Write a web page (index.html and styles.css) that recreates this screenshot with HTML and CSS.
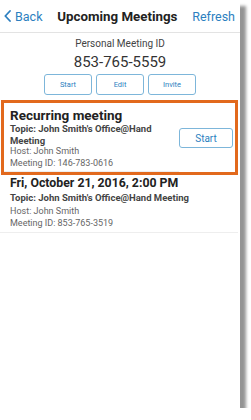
FILE: index.html
```html
<!DOCTYPE html>
<html>
<head>
<meta charset="utf-8">
<link rel="stylesheet" href="styles.css">
</head>
<body>
<div class="screen">
  <header class="topbar">
    <a class="back"><svg class="chev" width="7" height="12" viewBox="0 0 7 12"><path d="M6 1 L1.3 6 L6 11" fill="none" stroke="#2c7fc0" stroke-width="1.8" stroke-linecap="round" stroke-linejoin="round"/></svg>Back</a>
    <h1 class="title">Upcoming Meetings</h1>
    <a class="refresh">Refresh</a>
  </header>
  <section class="pmi">
    <div class="pmi-label">Personal Meeting ID</div>
    <div class="pmi-number">853-765-5559</div>
    <div class="pmi-actions">
      <button class="btn-sm">Start</button>
      <button class="btn-sm">Edit</button>
      <button class="btn-sm">Invite</button>
    </div>
  </section>
  <ul class="list">
    <li class="item item-hl">
      <div class="item-body">
        <div class="item-title">Recurring meeting</div>
        <div class="item-topic">Topic: John Smith's Office@Hand Meeting</div>
        <div class="item-meta">Host: John Smith</div>
        <div class="item-meta">Meeting ID: 146-783-0616</div>
      </div>
      <button class="btn-start">Start</button>
    </li>
    <li class="item item-plain">
      <div class="item-body">
        <div class="item-title big">Fri, October 21, 2016, 2:00 PM</div>
        <div class="item-topic">Topic: John Smith's Office@Hand Meeting</div>
        <div class="item-meta">Host: John Smith</div>
        <div class="item-meta">Meeting ID: 853-765-3519</div>
      </div>
    </li>
  </ul>
</div>
</body>
</html>
```

FILE: styles.css
```css
* { box-sizing: border-box; }
html, body { margin: 0; padding: 0; background: #fff; }
body { font-family: Roboto, "Noto Sans", Arial, sans-serif; }

.screen {
  width: 240px;
  height: 408px;
  background: #fff;
  box-shadow: 6px 6px 3px rgba(0,0,0,0.42);
  display: flex;
  flex-direction: column;
}

.topbar {
  height: 33px;
  border-bottom: 1px solid #e3e3e3;
  display: flex;
  align-items: center;
  justify-content: space-between;
  padding: 0 5px 0 4px;
  background: #fff;
}
.back, .refresh {
  color: #2c7fc0;
  font-size: 12.5px;
  display: flex;
  align-items: center;
}
.chev { margin-right: 4px; }
.title {
  margin: 0;
  font-size: 13.3px;
  font-weight: bold;
  color: #222;
}

.pmi {
  display: flex;
  flex-direction: column;
  align-items: center;
  padding-top: 5px;
}
.pmi-label { font-size: 10px; line-height: 12px; color: #444; }
.pmi-number { font-size: 15px; line-height: 18px; color: #333; margin-top: 3px; }
.pmi-actions { display: flex; gap: 4px; margin-top: 3px; }
.btn-sm {
  width: 48px;
  height: 21px;
  border: 1px solid #7db6da;
  border-radius: 3px;
  background: #fff;
  color: #2c7fc0;
  font-family: inherit;
  font-size: 7.5px;
  padding: 0;
}

.list { list-style: none; margin: 5px 0 0; padding: 0; }
.item { display: flex; }
.item-hl {
  margin: 0 2px 0 1px;
  border: 3px solid #e2691d;
}
.item-hl .item-body {
  padding: 5px 0 2px 6px;
  border-bottom: 1px solid #eee;
  flex: 1;
}
.item-hl .btn-start { margin-top: 25px; }
.item-plain .item-body {
  padding: 0 0 2px 10px;
  border-bottom: 1px solid #eee;
  flex: 1;
  margin-right: 2px;
}
.item-title { font-size: 13.5px; font-weight: bold; line-height: 15px; color: #222; }
.item-title.big { font-size: 12.3px; line-height: 17px; }
.item-topic { font-size: 9.5px; font-weight: bold; line-height: 11.5px; color: #444; padding-right: 6px; }
.item-meta { font-size: 9px; line-height: 11.5px; color: #666; }
.item-hl .item-topic { max-width: 150px; }
.item-plain .item-topic, .item-plain .item-meta { line-height: 12.5px; }
.btn-start {
  width: 54px;
  height: 20px;
  border: 1px solid #7db6da;
  border-radius: 3px;
  background: #fff;
  color: #2c7fc0;
  font-family: inherit;
  font-size: 10px;
  padding: 0;
  margin-right: 2px;
  flex-shrink: 0;
}
```
